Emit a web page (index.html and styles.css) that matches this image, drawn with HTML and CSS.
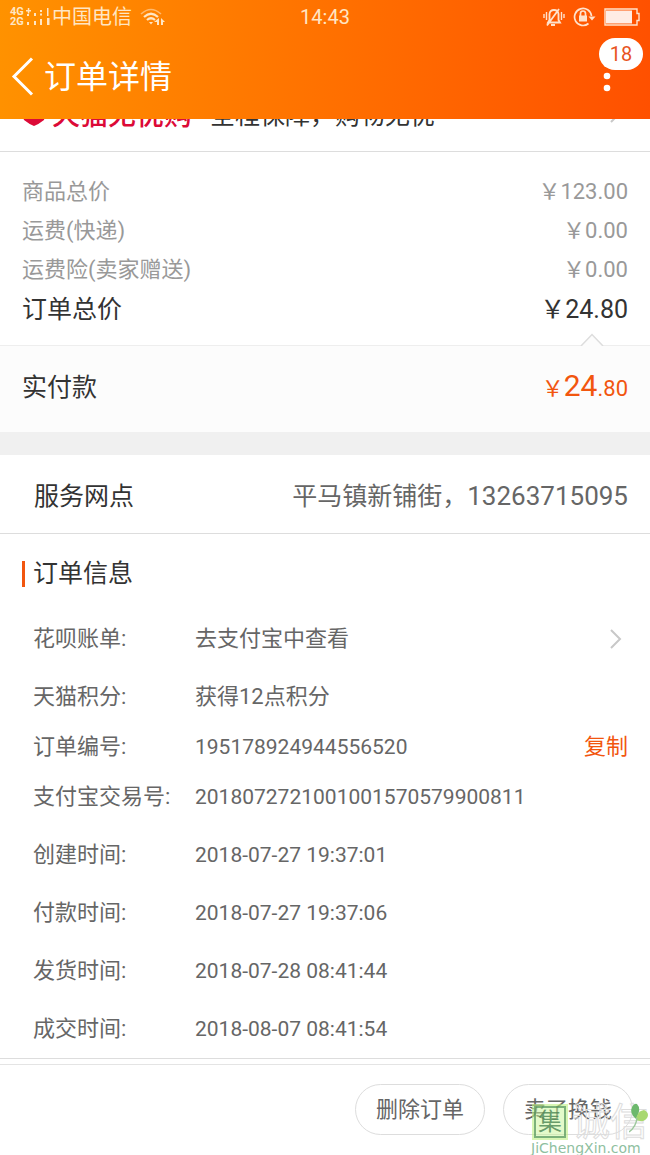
FILE: index.html
```html
<!DOCTYPE html>
<html lang="zh-CN">
<head>
  <meta charset="UTF-8">
  <meta name="viewport" content="width=device-width, initial-scale=1.0">
  <title>订单详情</title>
  <link rel="stylesheet" href="styles.css">
</head>
<body>
  <header class="header">
    <div class="status-bar">
      <div class="status-left">
        <div class="network"><div>4G</div><div>2G</div></div>
        <svg class="signal" width="25" height="20" viewBox="0 0 25 20" fill="#ffe6c4" aria-hidden="true">
          <path d="M1 3h5v1.500h-5zM2.800 1h1.500v5.500h-1.500zM2 7h2v2h-2zM2 15h2v3h-2zM9 6h2v3h-2zM9 14h2v4h-2zM15 3h2v2h-2zM15 6.500h2v2h-2zM15 12h2v6h-2z"/>
          <path d="M22 1h1.500v8h-1.500zM22 11h2.500v7h-2.500z"/>
        </svg>
        <span>中国电信</span>
        <svg class="wifi" width="26" height="18" viewBox="0 0 26 18" fill="none" stroke="#ffe6c4" aria-hidden="true">
          <path d="M1 6Q11-3 21 6" stroke-width="1.6" opacity=".55"/>
          <path d="M4 9Q11 2.500 18 9M7 12Q11 8.500 15 12" stroke-width="2.200"/>
          <path d="M9 14h4l-2 2.500z" fill="#ffe6c4" stroke="none"/>
          <path d="M14 14L19 10V17H17V14ZM21 17V10L25 14H23V17Z" fill="#ffe6c4" stroke="none"/>
        </svg>
      </div>
      <time class="clock">14:43</time>
      <div class="status-right">
        <svg width="22" height="20" viewBox="0 0 22 20" fill="none" stroke="#ffe2cc" stroke-width="1.800" aria-hidden="true">
          <path d="M5 15.500H17L15.500 13V7Q15 3 11 3Q7 3 6.500 7V13ZM8 18H12M4 18.500L16 2"/>
          <path d="M3.500 5V13M1 7V11M18.500 5V13M21 7V11" stroke-width="1.400"/>
        </svg>
        <svg width="23" height="20" viewBox="0 0 23 20" fill="none" stroke="#ffe2cc" stroke-width="1.700" aria-hidden="true">
          <path d="M18.500 9A8.500 8.500 0 1 0 15.500 16.500"/>
          <path d="M15.500 9.500H22.500L19 13.500Z" fill="#ffe2cc" stroke="none"/>
          <path d="M6 8.500H14V14.500H6Z" fill="#ffe2cc" stroke="none"/>
          <path d="M7.500 9V6.500A2.500 2.500 0 0 1 12.500 6.500V9"/>
        </svg>
        <svg width="36" height="18" viewBox="0 0 36 18" aria-hidden="true">
          <path d="M1 1H33V5.500H35V12.500H33V17H1Z" fill="none" stroke="#ffe2cc" stroke-width="1.400"/>
          <path d="M2 2.500H28V15.500H2Z" fill="#ffece4"/>
        </svg>
      </div>
    </div>
    <div class="nav">
      <button class="back" type="button" aria-label="返回">
        <svg width="24" height="40" viewBox="0 0 24 40" fill="none" stroke="#fff" stroke-width="3">
          <path d="M21 1.500L3 19.500L21 37.500"/>
        </svg>
      </button>
      <h1>订单详情</h1>
      <button class="more" type="button" aria-label="更多">
        <svg width="8" height="32" viewBox="0 0 8 32" fill="#fff">
          <circle cx="4" cy="3" r="3.300"/>
          <circle cx="4" cy="15" r="3.300"/>
          <circle cx="4" cy="27" r="3.300"/>
        </svg>
        <span class="badge">18</span>
      </button>
    </div>
  </header>

  <main>
    <a class="guarantee" href="#">
      <svg class="heart" width="24" height="26" viewBox="0 0 24 26" fill="#dc0a37" aria-hidden="true">
        <path d="M12 26Q7 24 2 20Q-1 14 1 7Q4 1 9 3L12 5L15 3Q20 1 23 7Q25 14 22 20Q17 24 12 26Z"/>
      </svg>
      <strong>天猫无忧购</strong>
      <span>全程保障，购物无忧</span>
      <svg class="arrow" width="12" height="20" viewBox="0 0 12 20"><path d="M1 1L10 10L1 19"/></svg>
    </a>

    <section class="prices">
      <div class="price"><span>商品总价</span><span>￥123.00</span></div>
      <div class="price"><span>运费(快递)</span><span>￥0.00</span></div>
      <div class="price"><span>运费险(卖家赠送)</span><span>￥0.00</span></div>
      <div class="price total"><span>订单总价</span><span>￥24.80</span></div>
      <svg class="notch" width="24" height="13" viewBox="0 0 24 13" aria-hidden="true">
        <path d="M1 13L12 1.500L23 13" fill="#fcfcfc" stroke="#ddd" stroke-width="1.500"/>
      </svg>
    </section>

    <section class="paid">
      <span>实付款</span>
      <span class="paid-sum">￥<b>24</b>.80</span>
    </section>

    <section class="outlet">
      <span>服务网点</span>
      <span class="outlet-info">平马镇新铺街，<span class="phone">13263715095</span></span>
    </section>

    <section class="info">
      <h2>订单信息</h2>
      <dl>
        <div class="row">
          <dt>花呗账单:</dt>
          <dd>
            <a href="#">去支付宝中查看
              <svg class="arrow" width="12" height="20" viewBox="0 0 12 20"><path d="M1 1L10 10L1 19"/></svg>
            </a>
          </dd>
        </div>
        <div class="row"><dt>天猫积分:</dt><dd>获得12点积分</dd></div>
        <div class="row tight"><dt>订单编号:</dt><dd class="num">195178924944556520</dd><dd><button class="copy" type="button">复制</button></dd></div>
        <div class="row tight"><dt>支付宝交易号:</dt><dd class="num">2018072721001001570579900811</dd></div>
        <div class="row"><dt>创建时间:</dt><dd class="num">2018-07-27 19:37:01</dd></div>
        <div class="row"><dt>付款时间:</dt><dd class="num">2018-07-27 19:37:06</dd></div>
        <div class="row"><dt>发货时间:</dt><dd class="num">2018-07-28 08:41:44</dd></div>
        <div class="row"><dt>成交时间:</dt><dd class="num">2018-08-07 08:41:54</dd></div>
      </dl>
    </section>
  </main>

  <footer class="actions">
    <button type="button">删除订单</button>
    <button type="button">卖了换钱</button>
    <div class="watermark">
      <div class="mark-name">
        <span class="mark-seal">集</span>
        <span class="mark-outline">诚信</span>
        <svg class="leaf" width="20" height="30" viewBox="0 0 20 30" aria-hidden="true">
          <path d="M7 16Q0 10 3 4Q5 0 8 1Q13 6 7 16Z" fill="#6cb86c"/>
          <path d="M7 17Q8 8 15 7Q21 10 18 15Q15 20 7 17Z" fill="#a8d870"/>
          <path d="M8 15Q7 24 0 29" fill="none" stroke="#9cc89c" stroke-width="1.500"/>
        </svg>
      </div>
      <div class="mark-site">JiChengXin.com</div>
    </div>
  </footer>
</body>
</html>
```
FILE: styles.css
```css
* {
  box-sizing: border-box;
}

body {
  margin: 0;
  font-family: Roboto, "Noto Sans CJK SC", sans-serif;
  font-size: 22px;
  color: #666;
  background: #fff;
}

h1, h2, dl, dd {
  margin: 0;
  font-weight: normal;
}

button {
  padding: 0;
  border: none;
  background: none;
  font: inherit;
  color: inherit;
  cursor: pointer;
}

a {
  color: inherit;
  text-decoration: none;
}

svg {
  display: block;
  flex: none;
}

/* header */
.header {
  position: fixed;
  top: 0;
  left: 0;
  right: 0;
  z-index: 2;
  height: 119px;
  color: #fff;
  background: linear-gradient(95deg, #ff9200, #ff5000);
}

.status-bar {
  display: grid;
  grid-template-columns: 1fr auto 1fr;
  align-items: center;
  height: 34px;
  padding: 0 10px;
  font-size: 20px;
  line-height: 34px;
  color: #ffe6c4;
}

.status-left, .status-right {
  display: flex;
  align-items: center;
}

.network {
  width: 15px;
  font-size: 11px;
  font-weight: bold;
  line-height: 10px;
}

.status-left span {
  margin: 0 8px 0 2px;
}

.status-right {
  justify-content: flex-end;
  gap: 8px;
}

.nav {
  display: flex;
  align-items: center;
  height: 85px;
  padding: 0 39px 0 11px;
}

.nav h1 {
  margin-left: 9px;
  font-size: 32px;
  line-height: 40px;
}

.more {
  position: relative;
  margin-left: auto;
}

.badge {
  position: absolute;
  left: -4px;
  bottom: 23px;
  width: 44px;
  border-radius: 16px;
  background: #fff;
  color: #e8541e;
  font-size: 20px;
  line-height: 32px;
}

/* guarantee row, partly scrolled under the header */
main {
  padding-top: 75px;
}

.guarantee {
  display: flex;
  align-items: center;
  height: 77px;
  padding: 0 28px 0 22px;
  border-bottom: 1px solid #ddd;
  font-size: 25px;
  color: #333;
}

.guarantee strong {
  margin: 0 18px 0 6px;
  font-size: 28px;
  font-weight: 500;
  color: #dc0a37;
}

.arrow {
  margin-left: auto;
  fill: none;
  stroke: #c8c8c8;
  stroke-width: 2;
}

/* prices */
.prices {
  position: relative;
  padding: 20px 22px 14px;
  border-bottom: 1px solid #eee;
}

.price {
  display: flex;
  justify-content: space-between;
  line-height: 39px;
  color: #999;
}

.total {
  font-size: 25px;
  line-height: 42px;
  color: #333;
}

.notch {
  position: absolute;
  right: 46px;
  bottom: -1px;
}

.paid {
  display: flex;
  align-items: center;
  justify-content: space-between;
  height: 109px;
  padding: 0 22px 8px;
  border-bottom: 23px solid #f0f0f0;
  background: #fcfcfc;
  font-size: 25px;
  color: #333;
}

.paid-sum {
  font-size: 22px;
  color: #f2560f;
}

.paid-sum b {
  font-size: 30px;
  font-weight: normal;
}

.outlet {
  display: flex;
  align-items: center;
  justify-content: space-between;
  height: 79px;
  padding: 0 22px 0 34px;
  border-bottom: 1px solid #ddd;
  font-size: 25px;
  color: #333;
}

.outlet-info {
  color: #666;
}

.phone {
  font-size: 26px;
}

/* order info */
.info {
  padding: 27px 22px 4px;
  border-bottom: 1px solid #ddd;
}

.info h2 {
  margin-bottom: 27px;
  padding-left: 8px;
  border-left: 3px solid #f2560f;
  font-size: 25px;
  line-height: 26px;
  color: #333;
}

.row {
  display: flex;
  margin-top: 8px;
  padding-left: 11px;
  line-height: 50px;
}

.row.tight {
  margin-top: 0;
}

.row dt {
  width: 162px;
}

.row dd:nth-child(2) {
  flex: 1;
}

.row a {
  display: flex;
  align-items: center;
  padding-right: 6px;
}

.num {
  font-size: 21px;
}

.copy {
  color: #f2560f;
}

/* bottom buttons */
.actions {
  position: relative;
  display: flex;
  justify-content: flex-end;
  gap: 18px;
  margin-top: 5px;
  padding: 19px 17px 20px;
  border-top: 1px solid #e4e4e4;
}

.actions button {
  width: 130px;
  height: 51px;
  border: 1px solid #ddd;
  border-radius: 26px;
  line-height: 44px;
}

.watermark {
  position: absolute;
  right: 0;
  bottom: 0;
  width: 119px;
  pointer-events: none;
}

.mark-name {
  display: flex;
  align-items: center;
  padding-left: 3px;
}

.mark-seal {
  width: 32px;
  border: 2px solid rgba(80, 145, 90, .7);
  outline: 2px solid rgba(190, 240, 130, .6);
  background: rgba(200, 245, 150, .5);
  font-size: 24px;
  line-height: 28px;
  text-align: center;
  color: rgba(70, 130, 80, .8);
}

.mark-outline {
  margin-left: 6px;
  font-size: 38px;
  line-height: 38px;
  color: transparent;
  -webkit-text-stroke: 1px #ddd;
}

.leaf {
  position: absolute;
  right: 1px;
  top: 0;
}

.mark-site {
  font-family: "DejaVu Sans", sans-serif;
  font-size: 14px;
  line-height: 14px;
  color: #8fbf9f;
}
```
